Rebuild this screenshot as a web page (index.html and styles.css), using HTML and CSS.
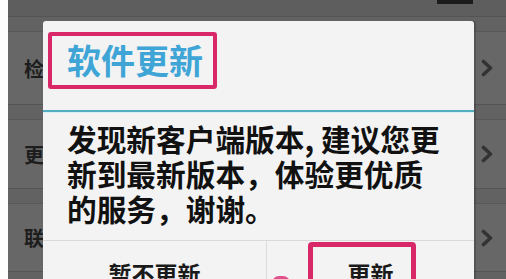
FILE: index.html
```html
<!DOCTYPE html>
<html lang="zh">
<head>
<meta charset="utf-8">
<link rel="stylesheet" href="styles.css">
</head>
<body>
<div class="screen">
  <div class="edge"></div>
  <div class="list">
    <div class="topbar"><span class="tbox"></span></div>
    <div class="gap"></div>
    <div class="row r1"><span class="label">检查更新</span><svg class="chev" viewBox="0 0 12 18"><polyline points="2.5,2.5 9.5,9 2.5,15.5"/></svg></div>
    <div class="gap"></div>
    <div class="row r2"><span class="label">更新日志</span><svg class="chev" viewBox="0 0 12 18"><polyline points="2.5,2.5 9.5,9 2.5,15.5"/></svg></div>
    <div class="gap"></div>
    <div class="row r3"><span class="label">联系我们</span><svg class="chev" viewBox="0 0 12 18"><polyline points="2.5,2.5 9.5,9 2.5,15.5"/></svg></div>
    <div class="gap last"></div>
  </div>
  <div class="dialog">
    <div class="head"><div class="title">软件更新</div></div>
    <div class="rule"></div>
    <div class="msg">发现新客户端版本, 建议您更<br>新到最新版本，体验更优质<br>的服务，谢谢。</div>
    <div class="buttons">
      <div class="btn">暂不更新</div>
      <div class="btn ok">更新<span class="mark"></span><span class="arrow"></span></div>
    </div>
  </div>
</div>
</body>
</html>
```

FILE: styles.css
```css
* { box-sizing: border-box; margin: 0; padding: 0; }
html, body { width: 506px; height: 279px; overflow: hidden; background: #fff; }
body { font-family: "Noto Sans CJK SC", "Noto Sans", sans-serif; }

.screen { position: relative; display: flex; width: 506px; height: 279px; overflow: hidden; }
.edge { width: 8px; background: #fdfdfd; }
.list { flex: 1; display: flex; flex-direction: column; background: #676767; }

.topbar { height: 16px; background: #5e5e5e; display: flex; justify-content: flex-end; }
.tbox { width: 36px; height: 4px; background: #1c1c1c; margin-right: 33px; }

.gap { height: 15px; border-top: 1px solid #545454; background: #626262; }
.gap.last { flex: 1; }

.row { display: flex; align-items: center; justify-content: space-between; padding: 0 13px 0 16px; border-top: 1px solid #595959; }
.r1 { height: 73px; }
.r2 { height: 69px; }
.r3 { height: 68px; }
.label { width: 19px; overflow: hidden; font-size: 20px; font-weight: 700; color: #1d1d1d; white-space: nowrap; }
.chev { width: 12px; height: 18px; }
.chev polyline { fill: none; stroke: #333; stroke-width: 3.6; stroke-linecap: round; stroke-linejoin: round; }

.dialog { position: absolute; left: 43px; top: 21px; width: 431px; height: 300px; background: #f3f3f3; border-radius: 3px 3px 0 0; box-shadow: 2px 0 0 rgba(0,0,0,0.18); overflow: hidden; }

.head { height: 89px; padding: 11px 0 0 5px; }
.title { display: inline-block; height: 57px; border: 4px solid #d82868; border-radius: 3px; padding: 0 10px 0 15px; font-size: 34px; line-height: 48px; font-weight: 700; color: #3ea5d6; }

.rule { height: 3px; border-top: 2px solid #52adc3; background: #d6f0f4; }

.msg { padding: 8px 0 14px 24px; font-size: 29.7px; line-height: 35px; font-weight: 700; color: #111; border-bottom: 1px solid #d9d9d9; white-space: nowrap; }

.buttons { display: grid; grid-template-columns: 223px 1fr; height: 80px; }
.btn { position: relative; text-align: center; padding-top: 17px; font-size: 23px; line-height: 30px; font-weight: 700; color: #1a1a1a; }
.btn.ok { border-left: 1px solid #dcdcdc; }
.mark { position: absolute; left: 41px; top: 1px; width: 108px; height: 64px; border: 5px solid #d82868; border-radius: 4px; }
.arrow { position: absolute; left: 5px; top: 35px; width: 18px; height: 10px; background: #e0508a; border-radius: 7px 7px 0 0; }
```
